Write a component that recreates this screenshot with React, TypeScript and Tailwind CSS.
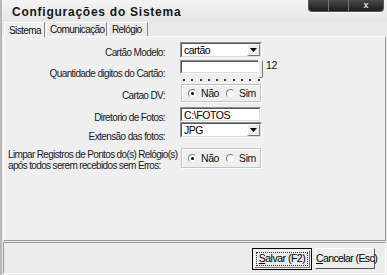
import React from "react";

const ui = { fontFamily: "'Liberation Sans', Arial, sans-serif" };

function Sunken({ className = "", children }: { className?: string; children?: React.ReactNode }) {
  return (
    <div className={`border border-t-[#8c8c8c] border-l-[#8c8c8c] border-b-[#fafafa] border-r-[#fafafa] ${className}`}>
      <div className="h-full border border-t-[#5a5a5a] border-l-[#5a5a5a] border-b-[#dcdcdc] border-r-[#dcdcdc] bg-white">
        {children}
      </div>
    </div>
  );
}

function Select({ value }: { value: string }) {
  return (
    <Sunken className="w-[82px] h-[16px]">
      <div className="flex h-full items-start">
        <span className="flex-1 pl-[2px] pt-[1px] text-[10.5px] tracking-[-0.5px] leading-none text-black">{value}</span>
        <div className="w-[13px] h-full flex items-center justify-center bg-[#ececec] border border-t-white border-l-white border-b-[#7a7a7a] border-r-[#7a7a7a]">
          <svg width="7" height="4" viewBox="0 0 7 4">
            <path d="M0 0h7L3.5 4z" fill="#000" />
          </svg>
        </div>
      </div>
    </Sunken>
  );
}

function Radio({ checked, label }: { checked?: boolean; label: string }) {
  return (
    <div className="flex items-center gap-[4px]">
      <div className="w-[9px] h-[9px] rounded-full bg-white border border-t-[#7c7c7c] border-l-[#7c7c7c] border-b-[#e8e8e8] border-r-[#e8e8e8] flex items-center justify-center">
        {checked && <div className="w-[3px] h-[3px] rounded-full bg-black" />}
      </div>
      <span className="text-[10.5px] tracking-[-0.4px] leading-none text-[#111]">{label}</span>
    </div>
  );
}

function RadioGroup({ h }: { h: string }) {
  return (
    <div className={`w-[80px] ${h} border border-[#c4c4c4] shadow-[inset_1px_1px_0_#fff,1px_1px_0_#fff] flex items-center gap-[7px] pl-[6px] pt-[1px]`}>
      <Radio checked label="Não" />
      <Radio label="Sim" />
    </div>
  );
}

function Label({ children, className = "" }: { children: React.ReactNode; className?: string }) {
  return (
    <div className={`w-[161px] shrink-0 text-right whitespace-nowrap text-[10px] tracking-[-0.6px] leading-none text-[#1a1a1a] ${className}`}>
      {children}
    </div>
  );
}

export default function App() {
  const ticks = [0, 1, 2, 3, 4, 5, 6, 7, 8, 9];
  return (
    <div className="w-[387px] h-[275px] bg-[#e9e9e9] border-l-2 border-[#b8b8b8] flex flex-col overflow-hidden" style={ui}>
      {/* titulo */}
      <div className="h-[21px] flex items-start bg-gradient-to-b from-[#f4f4f4] to-[#e6e6e6]">
        <span className="pl-[10px] pt-[6px] text-[12px] font-bold leading-none tracking-[0.75px] text-[#161616]">
          Configurações do Sistema
        </span>
        <div className="ml-auto mr-[3px] flex h-[12px] rounded-b-[4px] overflow-hidden border border-t-0 border-[#555] bg-gradient-to-b from-[#4a4a4a] to-[#1e1e1e] shadow-[0_1px_0_#fff]">
          <div className="w-[20px] border-r border-[#777]" />
          <div className="w-[20px] border-r border-[#777]" />
          <div className="w-[34px] flex items-center justify-center text-[9px] font-bold leading-none text-[#ddd]">x</div>
        </div>
      </div>

      {/* abas */}
      <div className="h-[15px] flex items-end pl-[2px] text-[10px] tracking-[-0.6px] leading-none text-[#111] whitespace-nowrap">
        <div className="h-[15px] w-[41px] pl-[4px] pt-[3px] bg-[#efefef] border border-b-0 border-t-white border-l-white border-r-[#8a8a8a] relative z-10 -mb-px">Sistema</div>
        <div className="h-[14px] w-[61px] ml-[1px] pl-[3px] pt-[2px] border border-b-0 border-t-white border-l-white border-r-[#8a8a8a]">Comunicação</div>
        <div className="h-[14px] w-[40px] ml-[1px] pl-[3px] pt-[2px] border border-b-0 border-t-white border-l-white border-r-[#8a8a8a]">Relógio</div>
      </div>

      {/* painel */}
      <div className="h-[205px] mx-px bg-[#efefef] border border-t-white border-l-white border-b-[#9a9a9a] border-r-[#9a9a9a] flex flex-col pt-[5px]">
        <div className="flex items-start h-[16px]">
          <Label className="pt-[6px]">Cartão Modelo:</Label>
          <div className="ml-[15px]"><Select value="cartão" /></div>
        </div>

        <div className="flex items-start mt-[2px] h-[20px]">
          <Label className="pt-[9px]">Quantidade digitos do Cartão:</Label>
          <div className="ml-[15px] flex flex-col w-[83px]">
            <div className="flex items-start">
              <Sunken className="w-[80px] h-[14px]" />
              <div className="w-[5px] h-[18px] -ml-[2px] bg-[#e8e8e8] border border-t-white border-l-white border-b-[#777] border-r-[#777] rounded-b-[2px]" />
            </div>
            <div className="flex gap-[6.3px] pl-[3px] mt-[1px]">
              {ticks.map((t) => (
                <div key={t} className="w-[2px] h-[2px] bg-[#333]" />
              ))}
            </div>
          </div>
          <span className="ml-[3px] text-[10.5px] tracking-[-0.4px] leading-none text-[#111]">12</span>
        </div>

        <div className="flex items-start mt-[4px] h-[18px]">
          <Label className="pt-[7px]">Cartao DV:</Label>
          <div className="ml-[16px]"><RadioGroup h="h-[18px]" /></div>
        </div>

        <div className="flex items-start mt-[5px] h-[15px]">
          <Label className="pt-[6px]">Diretorio de Fotos:</Label>
          <div className="ml-[15px]">
            <Sunken className="w-[81px] h-[15px]">
              <div className="pl-[2px] pt-[1px] text-[10.5px] tracking-[-0.4px] leading-none text-black">C:\FOTOS</div>
            </Sunken>
          </div>
        </div>

        <div className="flex items-start h-[16px]">
          <Label className="pt-[10px]">Extensão das fotos:</Label>
          <div className="ml-[15px]"><Select value="JPG" /></div>
        </div>

        <div className="flex items-start mt-[10px] h-[20px]">
          <div className="w-[172px] shrink-0 pl-[4px] pt-[2px] whitespace-nowrap text-[10px] tracking-[-0.65px] leading-[10.5px] text-[#1a1a1a]">
            Limpar Registros de Pontos do(s) Relógio(s)<br />após todos serem recebidos sem Erros:
          </div>
          <div className="ml-[5px]"><RadioGroup h="h-[20px]" /></div>
        </div>
      </div>

      {/* botoes */}
      <div className="h-[32px] mx-px mt-px bg-[#ececec] border border-t-[#9a9a9a] border-l-[#9a9a9a] border-b-white border-r-white flex items-center justify-end gap-[3px] pr-[10px] pt-[1px] whitespace-nowrap">
        <button className="w-[60px] h-[22px] border border-black bg-[#ececec] p-[1px] text-[10.5px] tracking-[-0.5px] leading-none text-black">
          <div className="h-full border border-t-white border-l-white border-b-[#7a7a7a] border-r-[#7a7a7a] p-px">
            <div className="h-full border border-dotted border-[#333] flex items-center justify-center">
              <span><u>S</u>alvar (F2)</span>
            </div>
          </div>
        </button>
        <button className="w-[60px] h-[21px] border border-t-white border-l-white border-b-[#555] border-r-[#555] bg-[#ececec] text-[10.5px] tracking-[-0.6px] leading-none text-black">
          <span><u>C</u>ancelar (Esc)</span>
        </button>
      </div>
    </div>
  );
}
